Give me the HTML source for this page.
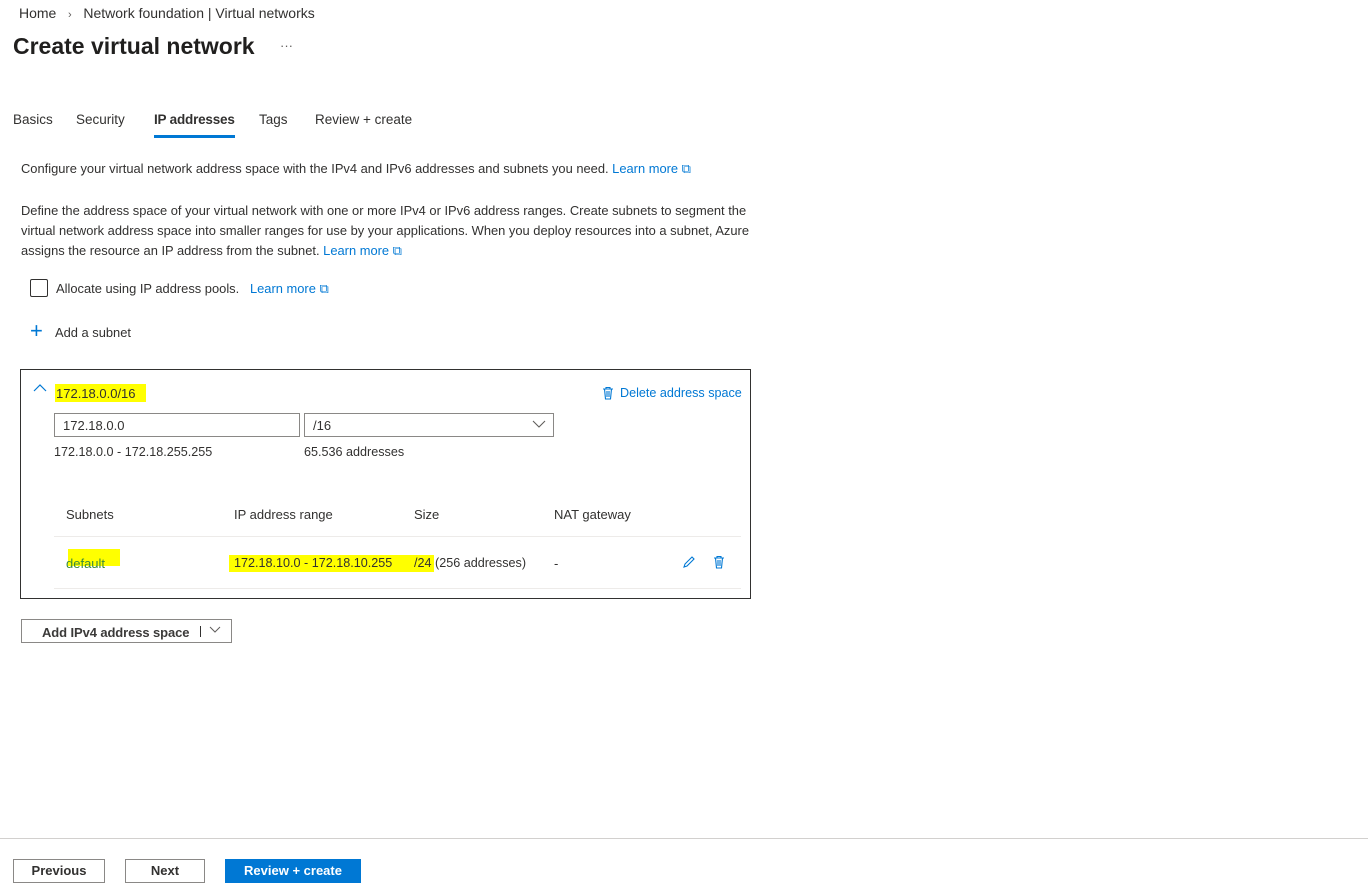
<!DOCTYPE html>
<html><head><meta charset="utf-8"><style>
body{margin:0;width:1368px;height:895px;background:#fff;font-family:"Liberation Sans",sans-serif;color:#323130;position:relative;overflow:hidden}
.a{position:absolute;white-space:nowrap}
.s13{font-size:13px}
.link{color:#0078d4}
.hl{background:#ffff00}
.box{position:absolute;border:1px solid #8a8886;background:#fff;box-sizing:border-box}
.btn{position:absolute;border:1px solid #8a8886;box-sizing:border-box;font-size:13px;font-weight:bold;text-align:center;line-height:22px;background:#fff}
</style></head><body>
<div class="a" style="left:19px;top:5px;font-size:14px;color:#323130">Home &nbsp;&nbsp;<span style="color:#605e5c;font-size:11px">›</span>&nbsp;&nbsp; Network foundation | Virtual networks</div>
<div class="a" style="left:13px;top:33px;font-size:23px;font-weight:bold;color:#201f1e">Create virtual network</div>
<div class="a" style="left:280px;top:38px;font-size:13px;color:#605e5c">···</div>
<div class="a" style="left:13px;top:112px;font-size:13.5px">Basics</div>
<div class="a" style="left:76px;top:112px;font-size:13.5px">Security</div>
<div class="a" style="left:154px;top:112px;font-size:13.5px;font-weight:bold;letter-spacing:-0.2px">IP addresses</div>
<div class="a" style="left:154px;top:135px;width:81px;height:3px;background:#0078d4"></div>
<div class="a" style="left:259px;top:112px;font-size:13.5px">Tags</div>
<div class="a" style="left:315px;top:112px;font-size:13.5px">Review + create</div>
<div class="a" style="left:21px;top:161px;font-size:12.9px">Configure your virtual network address space with the IPv4 and IPv6 addresses and subnets you need. <span class="link">Learn more ⧉</span></div>
<div class="a" style="left:21px;top:201px;font-size:12.9px;line-height:20px">Define the address space of your virtual network with one or more IPv4 or IPv6 address ranges. Create subnets to segment the<br>virtual network address space into smaller ranges for use by your applications. When you deploy resources into a subnet, Azure<br>assigns the resource an IP address from the subnet. <span class="link">Learn more ⧉</span></div>
<div class="a" style="left:30px;top:279px;width:18px;height:18px;border:1px solid #323130;box-sizing:border-box;border-radius:2px"></div>
<div class="a" style="left:56px;top:281px;font-size:12.9px">Allocate using IP address pools. &nbsp;&nbsp;<span class="link">Learn more ⧉</span></div>
<div class="a" style="left:30px;top:320px;font-size:22px;color:#0078d4;font-weight:300;line-height:22px">+</div>
<div class="a" style="left:55px;top:325px;font-size:12.9px">Add a subnet</div>
<div class="a" style="left:20px;top:369px;width:731px;height:230px;border:1px solid #323130;box-sizing:border-box"></div>
<svg class="a" style="left:33px;top:383px" width="14" height="10"><path d="M1 8L7 2L13 8" stroke="#0078d4" fill="none" stroke-width="1.2"/></svg>
<div class="a hl" style="left:55px;top:384px;width:91px;height:18px"></div>
<div class="a s13" style="left:56px;top:386px">172.18.0.0/16</div>
<svg class="a" style="left:602px;top:386px" width="12" height="14"><path d="M1 3H11M4 3V1.5H8V3M2.5 3L3.5 13H8.5L9.5 3M5 5V11M7 5V11" stroke="#0078d4" fill="none" stroke-width="1.1"/></svg>
<div class="a link" style="left:620px;top:386px;font-size:12.6px">Delete address space</div>
<div class="box" style="left:54px;top:413px;width:246px;height:24px"></div>
<div class="a s13" style="left:63px;top:418px">172.18.0.0</div>
<div class="box" style="left:304px;top:413px;width:250px;height:24px"></div>
<div class="a s13" style="left:313px;top:418px">/16</div>
<svg class="a" style="left:532px;top:420px" width="14" height="9"><path d="M1 1L7 7L13 1" stroke="#605e5c" fill="none" stroke-width="1.1"/></svg>
<div class="a s13" style="left:54px;top:445px;font-size:12.6px">172.18.0.0 - 172.18.255.255</div>
<div class="a s13" style="left:304px;top:445px;font-size:12.6px">65.536 addresses</div>
<div class="a s13" style="left:66px;top:507px">Subnets</div>
<div class="a s13" style="left:234px;top:507px">IP address range</div>
<div class="a s13" style="left:414px;top:507px">Size</div>
<div class="a s13" style="left:554px;top:507px">NAT gateway</div>
<div class="a" style="left:54px;top:536px;width:687px;height:1px;background:#edebe9"></div>
<div class="a hl" style="left:68px;top:549px;width:52px;height:17px"></div>
<div class="a s13" style="left:66px;top:556px;color:#0078d4"><span style="color:#3a8a3a">default</span></div>
<div class="a hl" style="left:229px;top:555px;width:205px;height:17px"></div>
<div class="a" style="left:234px;top:556px;font-size:12.6px">172.18.10.0 - 172.18.10.255</div>
<div class="a" style="left:414px;top:556px;font-size:12.6px">/24 (256 addresses)</div>
<div class="a s13" style="left:554px;top:556px">-</div>
<svg class="a" style="left:682px;top:555px" width="14" height="14"><path d="M2 12L3 9L10 2L12 4L5 11Z" stroke="#0078d4" fill="none" stroke-width="1.1"/></svg>
<svg class="a" style="left:713px;top:555px" width="12" height="14"><path d="M1 3H11M4 3V1.5H8V3M2.5 3L3.5 13H8.5L9.5 3M5 5V11M7 5V11" stroke="#0078d4" fill="none" stroke-width="1.1"/></svg>
<div class="a" style="left:54px;top:588px;width:687px;height:1px;background:#edebe9"></div>
<div class="box" style="left:21px;top:619px;width:211px;height:24px"></div>
<div class="a" style="left:42px;top:625px;font-size:13px;font-weight:bold;color:#3b3a39;letter-spacing:-0.1px">Add IPv4 address space</div>
<div class="a" style="left:200px;top:626px;width:1px;height:11px;background:#323130"></div>
<svg class="a" style="left:209px;top:626px" width="12" height="8"><path d="M1 1L6 6L11 1" stroke="#605e5c" fill="none" stroke-width="1"/></svg>
<div class="a" style="left:0;top:838px;width:1368px;height:1px;background:#d2d0ce"></div>
<div class="btn" style="left:13px;top:859px;width:92px;height:24px">Previous</div>
<div class="btn" style="left:125px;top:859px;width:80px;height:24px">Next</div>
<div class="btn" style="left:225px;top:859px;width:136px;height:24px;background:#0078d4;border-color:#0078d4;color:#fff">Review + create</div>
</body></html>
